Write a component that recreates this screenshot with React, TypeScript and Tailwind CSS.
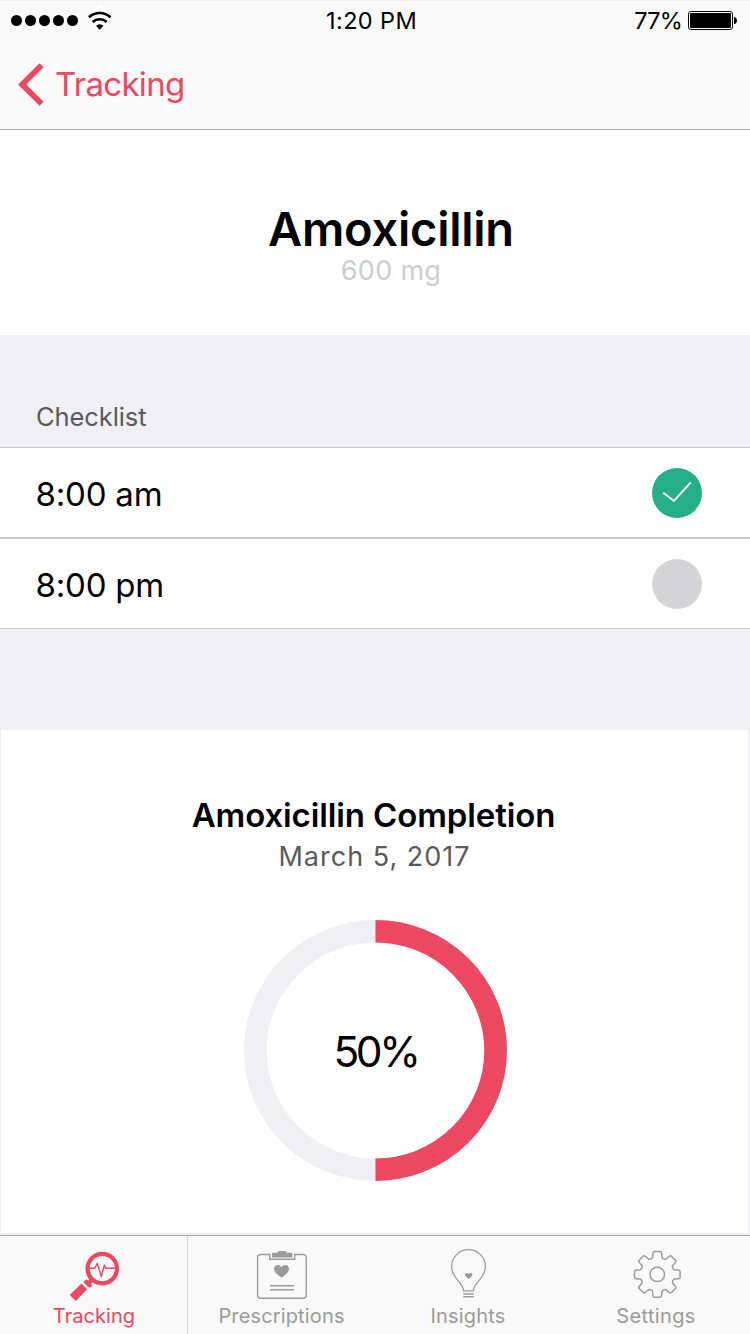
import type { ReactNode } from 'react'

const CHECKLIST = [
  { time: '8:00 am', taken: true },
  { time: '8:00 pm', taken: false },
]

/* ── Status bar glyphs ─────────────────────────── */
function WifiIcon() {
  return (
    <svg width="24" height="28" viewBox="0 0 24 28" fill="none">
      <path d="M11.7 0 L19 7 H4.4 Z" fill="#fff" />
      <path d="M0.9 13.2 A16 16 0 0 1 22.5 13.2" stroke="#000" strokeWidth="2.6" />
      <path d="M4.7 18 A10.4 10.4 0 0 1 18.7 18" stroke="#000" strokeWidth="2.6" />
      <path d="M8 21.8 A5.6 5.6 0 0 1 15.4 21.8 L11.7 25.8 Z" fill="#000" />
    </svg>
  )
}

function BatteryIcon() {
  return (
    <svg width="50" height="20" viewBox="0 0 50 20">
      <rect x="0.5" y="0.5" width="44" height="18" rx="2.6" fill="#fff" stroke="#000" />
      <rect x="2" y="2" width="41" height="15" rx="1.2" fill="#000" />
      <path d="M46 6 h0.8 Q49 7 49 9.5 T46.8 13 H46 Z" fill="#000" />
    </svg>
  )
}

/* ── Tab bar icons ─────────────────────────────── */
function TrackingIcon() {
  return (
    <svg width="61" height="57" viewBox="0 0 61 57" fill="none" stroke="currentColor">
      <circle cx="39.3" cy="22.6" r="14.7" strokeWidth="4.2" />
      <path
        d="M26 22.3 H31.8 L34.3 17.3 L38.3 30.6 L41.3 19 L42.7 22.3 H53"
        strokeWidth="1.4"
        strokeLinejoin="round"
      />
      <path
        d="M22.7 33.6 L25.6 34.6 L28 31.6 L31 34.6 L28.2 37.6 L29 40.4 L26.2 41.8 L20.6 36.4 Z"
        fill="currentColor"
        stroke="none"
      />
      <path
        d="M18.4 38.4 L23.3 43.2 L12.8 54.2 L7.6 49 Z"
        fill="currentColor"
        strokeWidth="1.2"
        strokeLinejoin="round"
      />
    </svg>
  )
}

function PrescriptionsIcon() {
  return (
    <svg width="61" height="57" viewBox="0 0 61 57" fill="none" stroke="currentColor" strokeWidth="1.4">
      <path d="M18.8 8.5 H9.7 Q6.6 8.5 6.6 11.6 V49.2 Q6.6 52.3 9.7 52.3 H52.2 Q55.3 52.3 55.3 49.2 V11.6 Q55.3 8.5 52.2 8.5 H43.7" />
      <path d="M18.8 7.8 V13.3 H43.7 V7.8" />
      <path
        d="M21 11.4 V8 Q21 6.8 22.2 6.8 H26.2 Q27 5 28.4 5 H33.8 Q35.2 5 36 6.8 H40.2 Q41.4 6.8 41.4 8 V11.4 Z"
        fill="currentColor"
        stroke="none"
      />
      <path
        d="M30.5 31.8 C26 28.4 23 26 23 22.9 C23 18.8 28.4 17.6 30.5 21.4 C32.6 17.6 38 18.8 38 22.9 C38 26 35 28.4 30.5 31.8 Z"
        fill="currentColor"
        stroke="none"
      />
      <path d="M19 39.7 H43 M19 43.8 H43" strokeWidth="1.5" />
    </svg>
  )
}

function InsightsIcon() {
  return (
    <svg width="61" height="57" viewBox="0 0 61 57" fill="none" stroke="currentColor" strokeWidth="1.3">
      <path d="M25.6 44.8 C25.2 36 13.6 32.6 13.6 20.6 C13.6 11.2 21.2 3.7 30.5 3.7 C39.8 3.7 47.4 11.2 47.4 20.6 C47.4 32.6 35.8 36 35.4 44.8 Z" />
      <path d="M25.3 48 H35.7 M25.3 50.7 H35.7" strokeWidth="1.5" />
      <path
        d="M30.7 33 C28.4 31.3 27 30.2 27 28.8 C27 26.7 29.7 26.2 30.7 28 C31.7 26.2 34.4 26.7 34.4 28.8 C34.4 30.2 33 31.3 30.7 33 Z"
        fill="currentColor"
        stroke="none"
      />
    </svg>
  )
}

// one tooth, pointing up, repeated every 45 degrees
const TOOTH = [
  [-4.7, -16.8], [-4.3, -21.3], [-4.2, -22.8], [-2.8, -22.8],
  [2.8, -22.8], [4.2, -22.8], [4.3, -21.3], [4.7, -16.8], [6, -14.9],
]

function gearPath() {
  let d = ''
  for (let i = 0; i < 8; i++) {
    const a = (i * Math.PI) / 4
    const p = TOOTH.map(([x, y]) => {
      const px = x * Math.cos(a) - y * Math.sin(a)
      const py = x * Math.sin(a) + y * Math.cos(a)
      return `${px.toFixed(2)} ${py.toFixed(2)}`
    })
    d += `${i === 0 ? 'M' : ' '}${p[0]} L${p[1]} Q${p[2]} ${p[3]} L${p[4]} Q${p[5]} ${p[6]} L${p[7]} Q${p[8]}`
  }
  return `${d} ${TOOTH[0].join(' ')} Z`
}

function SettingsIcon() {
  return (
    <svg width="60" height="57" viewBox="-31.3 -28.4 60 57" fill="none" stroke="currentColor" strokeWidth="1.5">
      <path d={gearPath()} strokeLinejoin="round" />
      <circle r="7.2" />
    </svg>
  )
}

/* ── Pieces ────────────────────────────────────── */
function Tab({ icon, label, className }: { icon: ReactNode; label: ReactNode; className: string }) {
  return (
    <div className={`flex flex-col items-center pt-[10px] text-[20px] leading-6 ${className}`}>
      {icon}
      <div className="mt-px whitespace-nowrap">{label}</div>
    </div>
  )
}

function CheckCircle({ checked }: { checked: boolean }) {
  if (!checked) return <div className="size-[50px] rounded-full bg-[#d4d4d6]" />
  return (
    <div className="size-[50px] rounded-full bg-[#26ae88]">
      <svg width="50" height="50" viewBox="0 0 50 50" fill="none">
        <path d="M11.3 24.7 L22 33 L38.7 14.3" stroke="#fff" strokeWidth="1.9" />
      </svg>
    </div>
  )
}

function CompletionRing() {
  return (
    <div className="grid h-[261px] w-[263px] place-items-center">
      <svg
        width="263"
        height="261"
        viewBox="0 0 262 262"
        preserveAspectRatio="none"
        fill="none"
        strokeWidth="22.6"
        className="col-start-1 row-start-1"
      >
        <circle cx="131" cy="131" r="119.7" stroke="#efeff4" />
        <path d="M131 11.3 A119.7 119.7 0 0 1 131 250.7" stroke="#eb4862" />
      </svg>
      <span className="col-start-1 row-start-1 pt-[3px] text-[42.5px] leading-[50px] tracking-[-3.4px]">
        50%
      </span>
    </div>
  )
}

export default function App() {
  return (
    <div className="flex h-[1334px] w-[750px] flex-col overflow-hidden bg-[#efeff4] font-['Inter',sans-serif] text-black">
      {/* Status bar + navigation */}
      <header className="h-[130px] shrink-0 border-t border-b border-t-[#efeff4] border-b-[#b2b2b2] bg-[#f9f9f9]">
        <div className="flex h-[39px] items-center pl-[11px] pr-3">
          <div className="flex w-[315px] items-center">
            <div className="flex gap-[3px]">
              {[0, 1, 2, 3, 4].map((i) => (
                <div key={i} className="size-[11px] rounded-full bg-black" />
              ))}
            </div>
            <div className="mb-[6px] ml-[10px]">
              <WifiIcon />
            </div>
          </div>
          <div className="whitespace-nowrap text-[23.5px] leading-7 tracking-[0.4px]">1:20 PM</div>
          <div className="ml-auto flex items-center">
            <span className="mr-[6px] text-[23.5px] leading-7 tracking-[-0.8px]">77%</span>
            <BatteryIcon />
          </div>
        </div>
        <div className="flex h-[89px] items-start pl-[18px] pt-[22px] text-[#eb4862]">
          <svg width="28" height="44" viewBox="0 0 28 44" fill="none" className="mt-px shrink-0">
            <path d="M23.6 2.2 L4.2 21.5 L23.6 40.8" stroke="currentColor" strokeWidth="5.8" />
          </svg>
          <span className="ml-[9px] text-[33px] leading-[44px] tracking-[-0.7px]">Tracking</span>
        </div>
      </header>

      {/* Medication */}
      <section className="flex h-[205px] shrink-0 flex-col items-center bg-white pl-[32px] pt-[73px]">
        <h1 className="text-[47px] font-semibold leading-[52px] tracking-[-0.25px]">Amoxicillin</h1>
        <p className="mt-px text-[27px] leading-[30px] tracking-[0.3px] text-[#cdcdcd]">600 mg</p>
      </section>

      {/* Checklist */}
      <h2 className="h-[112px] shrink-0 pl-9 pt-[66px] text-[25.5px] leading-8 tracking-[-0.1px] text-[#5a5a5c]">
        Checklist
      </h2>
      <ul className="flex shrink-0 flex-col gap-0.5 border-y border-[#c8c7cc] bg-[#c8c7cc]">
        {CHECKLIST.map((item) => (
          <li key={item.time} className="flex h-[89px] items-center justify-between bg-white pl-[35.5px] pr-12">
            <span className="pt-[3px] text-[33px] leading-10 tracking-[-0.2px]">{item.time}</span>
            <CheckCircle checked={item.taken} />
          </li>
        ))}
      </ul>

      {/* Completion card */}
      <section className="ml-px mt-[101px] flex h-[503px] w-[747px] shrink-0 flex-col items-center bg-white pt-[65px]">
        <h3 className="mr-[2px] text-[33px] font-semibold leading-10 tracking-[-0.12px]">Amoxicillin Completion</h3>
        <p className="mt-[6px] text-[27px] leading-8 tracking-[1px] text-[#5a5a5c]">March 5, 2017</p>
        <div className="ml-[2px] mt-[47px]">
          <CompletionRing />
        </div>
      </section>

      {/* Tab bar */}
      <nav className="mt-0.5 flex h-[99px] shrink-0 border-t border-[#a9a8ad] bg-[#f9f9f9]">
        <Tab
          icon={<TrackingIcon />}
          label={<span className="pl-px tracking-[0.05px]">Tracking</span>}
          className="w-[188px] border-r border-[#d8d8dc] text-[#eb4862]"
        />
        <Tab
          icon={<PrescriptionsIcon />}
          label={<span className="tracking-[0.15px]">Prescriptions</span>}
          className="w-[187px] text-[#9b9b9b]"
        />
        <Tab
          icon={<InsightsIcon />}
          label={<span className="pr-px tracking-[0.2px]">Insights</span>}
          className="w-[187px] text-[#9b9b9b]"
        />
        <Tab
          icon={<SettingsIcon />}
          label={<span className="tracking-[0.35px]">Settings</span>}
          className="w-[188px] text-[#9b9b9b]"
        />
      </nav>
    </div>
  )
}
